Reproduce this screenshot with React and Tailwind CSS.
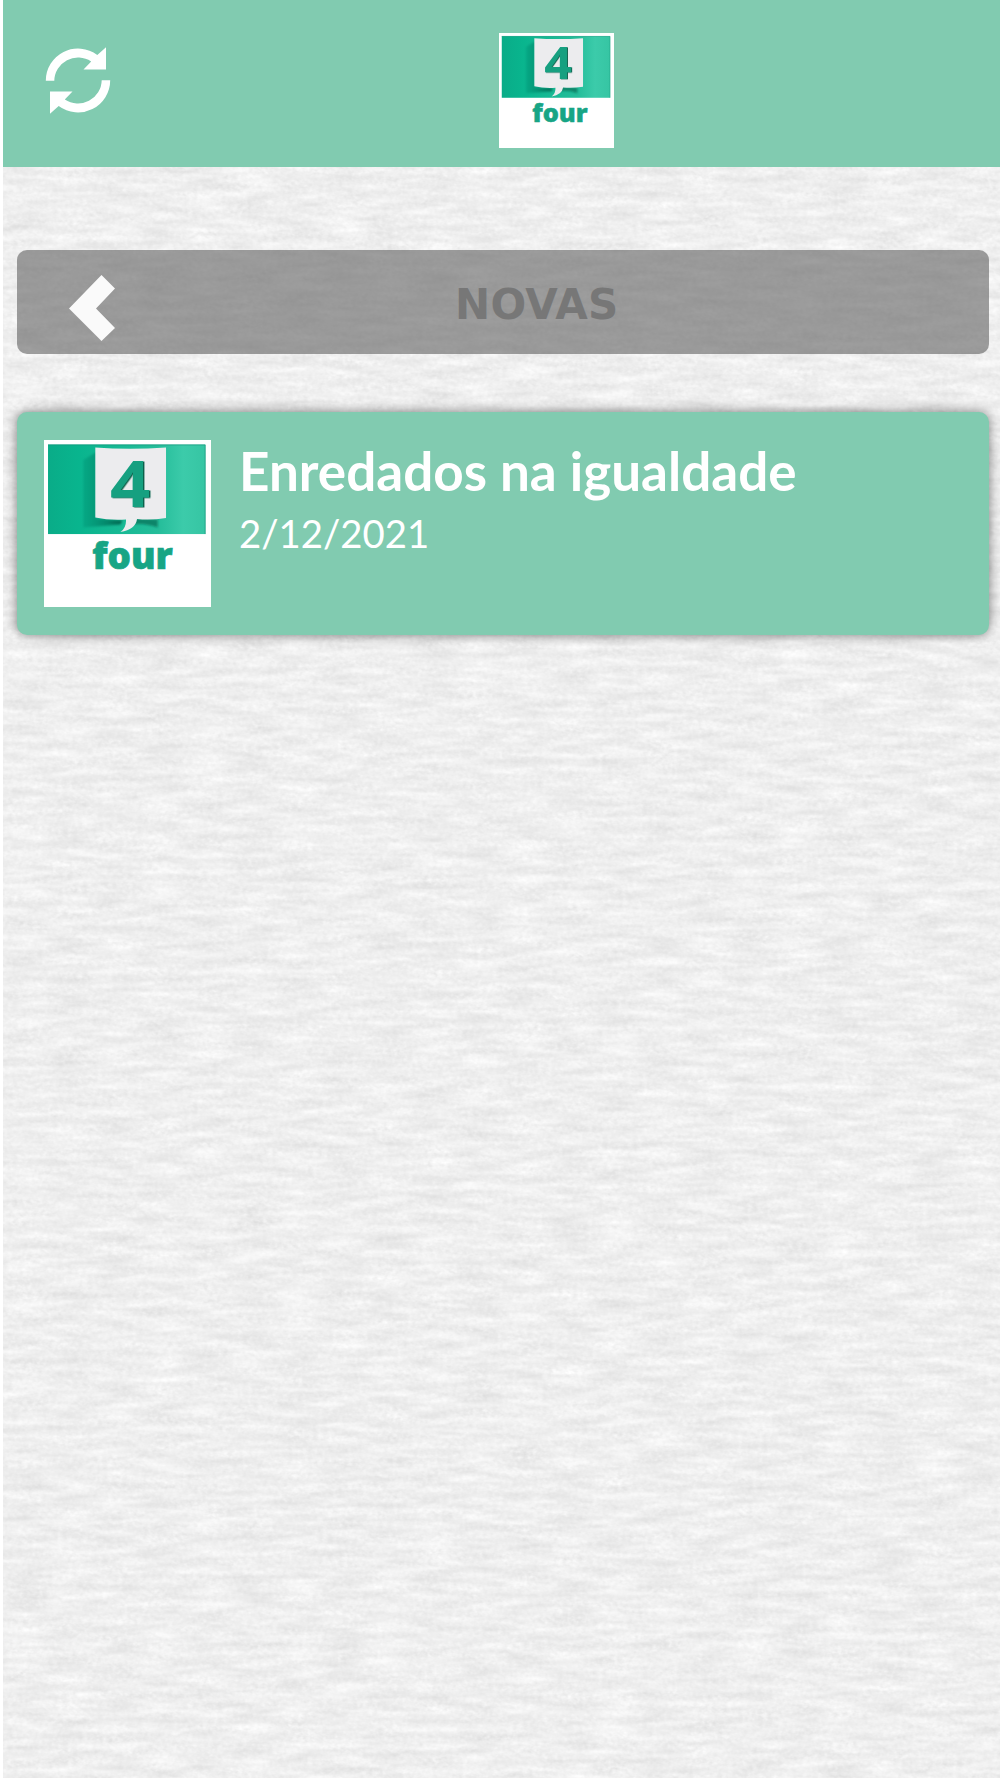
import React from "react";

function PaperTexture() {
  return (
    <svg className="absolute inset-0 h-full w-full" aria-hidden="true">
      <filter id="paper" x="0" y="0" width="100%" height="100%" colorInterpolationFilters="sRGB">
        <feTurbulence type="fractalNoise" baseFrequency="0.022 0.12" numOctaves="2" seed="8" result="fibre" />
        <feTurbulence type="fractalNoise" baseFrequency="0.2 0.28" numOctaves="2" seed="3" result="grain" />
        <feComposite in="fibre" in2="grain" operator="arithmetic" k2="0.65" k3="0.35" result="mix" />
        <feColorMatrix
          in="mix"
          type="matrix"
          values="0.18 0 0 0 0.846  0.18 0 0 0 0.846  0.18 0 0 0 0.846  0 0 0 0 1"
        />
      </filter>
      <rect width="100%" height="100%" filter="url(#paper)" />
    </svg>
  );
}

function FourLogo({ id, className }) {
  return (
    <svg viewBox="0 0 166 166" className={className} overflow="visible" role="img" aria-label="four">
      <defs>
        <linearGradient id={id + "-wall"} x1="0" x2="1" y1="0" y2="0">
          <stop offset="0" stopColor="#0aac88" />
          <stop offset="0.2" stopColor="#09b58e" />
          <stop offset="0.7" stopColor="#25bd9a" />
          <stop offset="0.86" stopColor="#3ccbaa" />
          <stop offset="1" stopColor="#36c5a3" />
        </linearGradient>
        <linearGradient id={id + "-shade"} x1="0" x2="1" y1="0" y2="0">
          <stop offset="0" stopColor="#08997a" stopOpacity="0.5" />
          <stop offset="1" stopColor="#04664f" />
        </linearGradient>
        <filter id={id + "-soft"} x="-20%" y="-20%" width="140%" height="140%">
          <feGaussianBlur stdDeviation="1.3" />
        </filter>
        <filter id={id + "-edge"} x="-20%" y="-20%" width="140%" height="140%">
          <feDropShadow dx="1.4" dy="0.5" stdDeviation="0.3" floodColor="#075f49" />
        </filter>
      </defs>
      <rect width="166" height="166" fill="#fff" />
      <rect x="4" y="4.5" width="156.5" height="89" fill={`url(#${id}-wall)`} />
      <path d="M4 4.9H160.2V93.5" fill="none" stroke="#16937a" strokeWidth="0.9" opacity="0.7" />
      <path d="M39 20L52 12V78L78 80L76 84L39 87Z" fill={`url(#${id}-shade)`} filter={`url(#${id}-soft)`} />
      <path d="M88 78L113 79L113 87Q100 82 86 84Z" fill="#0b8469" filter={`url(#${id}-soft)`} />
      <path
        d="M51 7.5Q85 10 121.3 7.5V77.5Q106 80 92.5 78.5Q91 89 76 91.5Q82 87 81.5 79Q65 80 51 77Z"
        fill="#ececee"
      />
      <g fontFamily="'Open Sans', sans-serif">
        <text
          x="65.5"
          y="67"
          fontSize="64"
          fontWeight="700"
          textLength="40"
          lengthAdjust="spacingAndGlyphs"
          fill="#16a080"
          filter={`url(#${id}-edge)`}
        >
          4
        </text>
        <text x="48" y="128.5" fontSize="36" fontWeight="800" textLength="80" lengthAdjust="spacingAndGlyphs" fill="#17a585" stroke="#17a585" strokeWidth="0.7">four</text>
      </g>
    </svg>
  );
}

function RefreshIcon() {
  return (
    <svg viewBox="45 47 66 68" className="h-[68px] w-[66px]" fill="#fff">
      <path id="half" d="M45.8 80.8A32.2 32.2 0 0 1 97.3 55L106 47.3V69.5H83.5L91.2 61.5A23.7 23.7 0 0 0 54.3 80.8Z" />
      <use href="#half" transform="rotate(180 78 80.5)" />
    </svg>
  );
}

export default function App() {
  return (
    <div className="h-[1778px] w-[1000px] overflow-hidden bg-white pl-[3px]">
      <div className="relative isolate h-full overflow-hidden bg-[#f0f0f0]">
        <div className="absolute inset-0 -z-10">
          <PaperTexture />
        </div>
        <header className="flex h-[166.5px] items-start bg-[#81cbb0]">
          <button className="mt-[47px] ml-[42px]" aria-label="Refresh">
            <RefreshIcon />
          </button>
          <FourLogo id="head" className="mt-[33px] ml-[388px] size-[115px]" />
        </header>
        <main className="mt-[83.5px] mr-[11px] ml-[14px]">
          <div className="flex h-[104px] items-start rounded-[10px] bg-[#616161]/60">
            <button className="mt-[25px] ml-[52px]" aria-label="Back">
              <svg viewBox="0 0 46 66" className="h-[66px] w-[46px]" fill="#fafafa">
                <path d="M0 33.5L32.5 0L46 13.5L27 33.5L46 53L32.5 66Z" />
              </svg>
            </button>
            <h1 className="mt-[30px] ml-[340px] font-['DejaVu_Sans',sans-serif] text-[42px] leading-[49px] font-bold tracking-[0.3px] text-[#777]">
              NOVAS
            </h1>
          </div>
          <article className="mt-[58px] flex h-[223px] items-start rounded-[10px] bg-[#81cbb0] pt-[28px] pl-[27px] font-['Lato',sans-serif] text-white shadow-[0_0_12px_rgba(0,0,0,0.5)]">
            <FourLogo id="item" className="size-[167px]" />
            <div className="ml-[28px]">
              <h2 className="-mt-px text-[53px] leading-[64px] font-bold tracking-[0.02px]">Enredados na igualdade</h2>
              <p className="text-[38.3px] leading-[60px]">2/12/2021</p>
            </div>
          </article>
        </main>
      </div>
    </div>
  );
}
